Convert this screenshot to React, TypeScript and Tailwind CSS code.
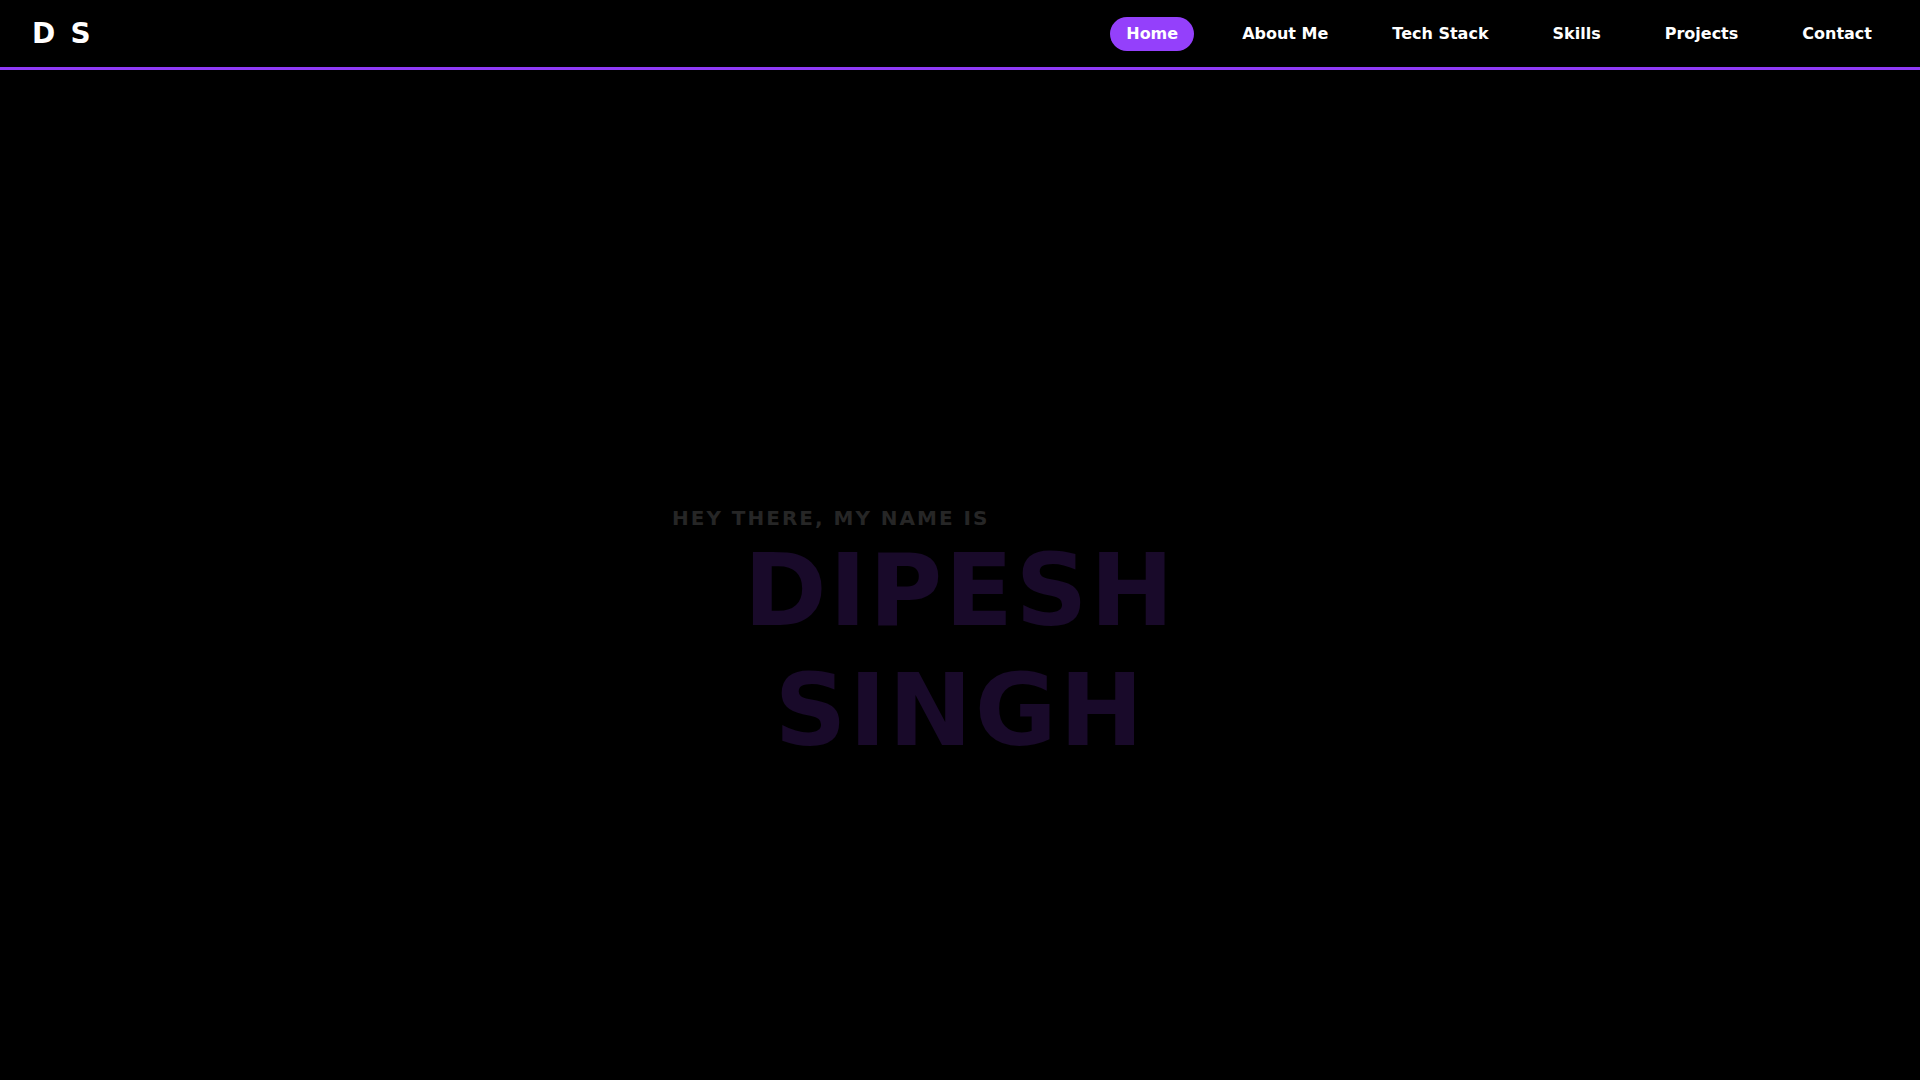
import React from "react";

const links = ["Home", "About Me", "Tech Stack", "Skills", "Projects", "Contact"];

export default function App() {
  return (
    <div
      className="min-h-screen w-full bg-black text-white"
      style={{ fontFamily: '"DejaVu Sans", Verdana, sans-serif' }}
    >
      <nav className="flex h-[70px] items-center justify-between border-b-[3px] border-[#8f3bf7] bg-black px-8">
        <div className="text-[28px] font-bold leading-none tracking-widest">D S</div>
        <ul className="flex items-center gap-8">
          {links.map((l, i) => (
            <li key={l}>
              <a
                href="#"
                className={
                  i === 0
                    ? "block rounded-full bg-[#9440fb] px-4 py-[5px] text-base font-bold leading-6 text-white"
                    : "block rounded-full px-4 py-[5px] text-base font-bold leading-6 text-white"
                }
              >
                {l}
              </a>
            </li>
          ))}
        </ul>
      </nav>
      <section className="flex w-full justify-center pt-[434px]">
        <div className="w-full max-w-xl">
          <p className="text-left text-xl font-bold uppercase leading-7 tracking-widest text-[#262626]">
            Hey there, my name is
          </p>
          <h1 className="-mt-px text-center text-[100px] font-bold uppercase leading-[1.2] tracking-[0.025em] text-[#190a2a]">
            Dipesh
            <br />
            Singh
          </h1>
        </div>
      </section>
    </div>
  );
}
